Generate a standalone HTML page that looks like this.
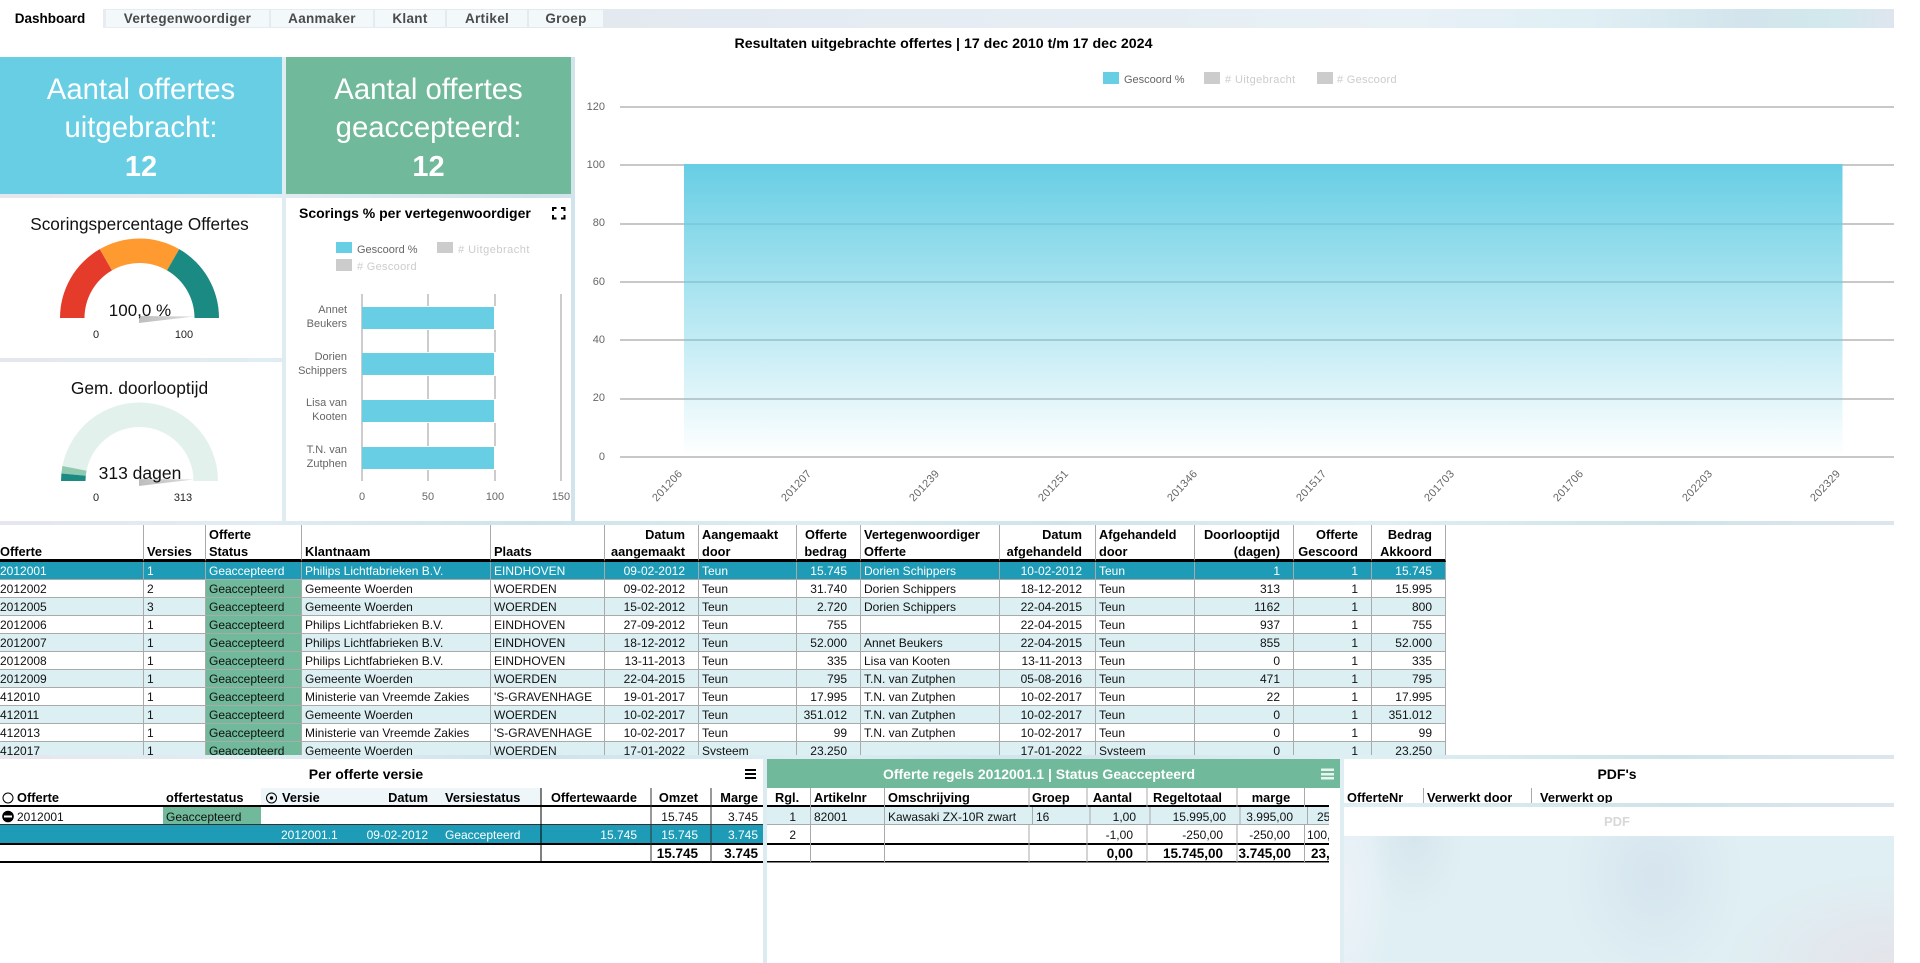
<!DOCTYPE html>
<html lang="nl"><head><meta charset="utf-8"><title>Dashboard</title>
<style>
html,body{margin:0;padding:0;background:#fff}
body{position:relative;width:1920px;height:963px;overflow:hidden;font-family:"Liberation Sans",sans-serif;font-size:12px;color:#111}
.r{position:absolute;background:#fff}
.a{position:absolute;white-space:nowrap;line-height:16px}
.b{font-weight:bold;color:#000;font-size:12.8px}
.w{color:#fff}
.c{transform:translateX(-50%)}
.tab{position:absolute;top:10px;height:17px;background:#f3f8fb;font-weight:bold;font-size:13.5px;letter-spacing:.3px;line-height:17px;text-align:center;color:#4a4a4a}
.card{position:absolute;top:57px;height:137px;color:#fff;text-align:center;font-size:29.3px}
.card div{position:absolute;left:0;right:0;white-space:nowrap;line-height:40px}
svg{position:absolute;left:0;top:0}
svg text{font-family:"Liberation Sans",sans-serif}
#tw{position:absolute;left:0;top:525px;width:1446px;height:230px;overflow:hidden}
#m{border-collapse:separate;border-spacing:0;table-layout:fixed;width:1446px;font-size:12px}
#m td,#m th{box-sizing:border-box;height:18px;padding:0 0 0 3px;border-right:1px solid #aaa;border-bottom:1px solid #aaa;line-height:16px;white-space:nowrap;overflow:hidden;text-align:left;font-weight:normal;color:#111}
#m th{height:36px;font-size:12.8px;font-weight:bold;color:#000;vertical-align:bottom;border-bottom:3px solid #000;line-height:17px;position:relative}
#m th span{position:relative;top:1px}
#m .rr{text-align:right;padding:0 13px 0 0}
#m td:first-child,#m th:first-child{padding-left:0}
#m tr.s td{background:#1e9bb6;color:#fff}
#m tr.z td{background:#dceff3}
#m td.g,#m tr.z td.g{background:#70b99b}
</style></head><body>

<div class="r" style="left:0;top:9px;width:1894px;height:954px;background:linear-gradient(90deg,#e6e6ee 0,#e0edf2 14%,#cfe2ea 28%,#dcedf2 42%,#d0e3eb 56%,#dfeff3 72%,#cfe3ea 88%,#dde6ee 100%)"></div>
<div class="r" style="left:0;top:9px;width:1894px;height:19px;background:linear-gradient(90deg,#e8ecf2 0,#e4e9f0 32%,#e6eef4 60%,#e8f1f6 74%,#dfeff4 84%,#d3e4ec 92%,#d2e9ed 97%,#dfe5ee 100%)"></div>
<div class="r" style="left:0;top:28px;width:1894px;height:29px"></div>

<!-- tabs -->
<div class="r" style="left:0;top:9px;width:103px;height:19px"></div>
<div class="tab" style="left:0;width:103px;background:#fff;color:#000;padding-right:3px;box-sizing:border-box;letter-spacing:0">Dashboard</div>
<div class="tab" style="left:106px;width:163px">Vertegenwoordiger</div>
<div class="tab" style="left:271px;width:102px">Aanmaker</div>
<div class="tab" style="left:375px;width:70px">Klant</div>
<div class="tab" style="left:447px;width:80px">Artikel</div>
<div class="tab" style="left:529px;width:74px">Groep</div>

<!-- cards -->
<div class="card" style="left:0;width:282px;background:#67cee4">
<div style="top:13px">Aantal offertes</div><div style="top:51px">uitgebracht:</div><div style="top:90px;font-weight:bold;font-size:29px">12</div></div>
<div class="card" style="left:286px;width:285px;background:#70b99b">
<div style="top:13px">Aantal offertes</div><div style="top:51px">geaccepteerd:</div><div style="top:90px;font-weight:bold;font-size:29px">12</div></div>

<!-- white panels -->
<div class="r" style="left:0;top:198px;width:282px;height:160px"></div>
<div class="r" style="left:0;top:362px;width:282px;height:159px"></div>
<div class="r" style="left:286px;top:198px;width:285px;height:323px"></div>
<div class="r" style="left:575px;top:57px;width:1319px;height:464px"></div>
<div class="r" style="left:0;top:525px;width:1894px;height:230px"></div>
<div class="r" style="left:0;top:759px;width:763px;height:204px"></div>
<div class="r" style="left:767px;top:759px;width:573px;height:29px;background:#70b99b"></div>
<div class="r" style="left:767px;top:788px;width:573px;height:175px"></div>
<div class="r" style="left:1344px;top:759px;width:550px;height:44px"></div>
<div class="r" style="left:1344px;top:807px;width:550px;height:29px"></div>
<div class="r" style="left:1344px;top:836px;width:550px;height:127px;background:radial-gradient(ellipse 50px 130px at 0 60px,#edf2f8 0,rgba(237,242,248,0) 100%),radial-gradient(ellipse 50px 80px at 70px 0,#d6e6ed 0,rgba(214,230,237,0) 100%),radial-gradient(ellipse 90px 110px at 310px 40px,#d6e5ee 0,rgba(214,229,238,0) 100%),radial-gradient(ellipse 170px 90px at 100% 100%,#e4e3ea 0,rgba(228,227,234,0) 100%),#dfeff3"></div>

<svg width="1920" height="963" viewBox="0 0 1920 963">
<defs>
<linearGradient id="ar" x1="0" y1="0" x2="0" y2="1"><stop offset="0" stop-color="#67cee4" stop-opacity="1"/><stop offset="1" stop-color="#67cee4" stop-opacity="0"/></linearGradient>
<linearGradient id="nd" x1="0" y1="0" x2="1" y2="0"><stop offset="0" stop-color="#bdbdbd"/><stop offset="1" stop-color="#dcdcdc"/></linearGradient>
</defs>

<!-- gauge 1 -->
<path d="M60 318A79.500 79.500 0 0 1 99.750 249.150L112 270.370A55 55 0 0 0 84.500 318Z" fill="#e53b2a"/>
<path d="M99.750 249.150A79.500 79.500 0 0 1 179.250 249.150L167 270.370A55 55 0 0 0 112 270.370Z" fill="#ff9a30"/>
<path d="M179.250 249.150A79.500 79.500 0 0 1 219 318L194.500 318A55 55 0 0 0 167 270.370Z" fill="#1b8a82"/>
<polygon points="139,316 194,316.500 139,323" fill="url(#nd)"/>
<text x="139.500" y="230" font-size="17.200" text-anchor="middle" fill="#111">Scoringspercentage Offertes</text>
<text x="140" y="316" font-size="17" text-anchor="middle" fill="#111">100,0 %</text>
<text x="96" y="338" font-size="11" text-anchor="middle" fill="#222">0</text>
<text x="184" y="338" font-size="11" text-anchor="middle" fill="#222">100</text>

<!-- gauge 2 -->
<path d="M61 481A78.500 78.500 0 0 1 218 481L193.500 481A54 54 0 0 0 85.500 481Z" fill="#e2f1eb"/>
<path d="M61.400 473.500L62.400 466L86.500 470.700L85.750 475.800Z" fill="#8fc9b0"/>
<path d="M61 481L61.400 473.500L85.750 475.800L85.500 481Z" fill="#1b8a82"/>
<polygon points="139,479 194,479.500 139,486" fill="url(#nd)"/>
<text x="139.500" y="394" font-size="17.400" text-anchor="middle" fill="#111">Gem. doorlooptijd</text>
<text x="140" y="479" font-size="17.500" text-anchor="middle" fill="#111">313 dagen</text>
<text x="96" y="501" font-size="11" text-anchor="middle" fill="#222">0</text>
<text x="183" y="501" font-size="11" text-anchor="middle" fill="#222">313</text>

<!-- bar chart -->
<text x="299" y="218" font-size="14" font-weight="bold" fill="#000">Scorings % per vertegenwoordiger</text>
<path d="M553 211V208H556.500M561 208H564.500V211M564.500 215V218.500H561M556.500 218.500H553V215" fill="none" stroke="#000" stroke-width="2"/>
<rect x="336" y="242" width="16" height="11" fill="#67cee4"/>
<text x="357" y="253" font-size="11" fill="#666">Gescoord %</text>
<rect x="437" y="242" width="16" height="11" fill="#ccc"/>
<text x="458" y="253" font-size="11" fill="#ccc" letter-spacing=".5"># Uitgebracht</text>
<rect x="336" y="259" width="16" height="12" fill="#ccc"/>
<text x="357" y="270" font-size="11" fill="#ccc" letter-spacing=".3"># Gescoord</text>
<g fill="#ccc"><rect x="361" y="294" width="2" height="187"/><rect x="427" y="294" width="2" height="187"/><rect x="494" y="294" width="2" height="187"/><rect x="560" y="294" width="2" height="187"/></g>
<g fill="#fff"><rect x="363" y="306" width="133" height="24"/><rect x="363" y="352" width="133" height="24"/><rect x="363" y="399" width="133" height="24"/><rect x="363" y="446" width="133" height="24"/></g>
<g fill="#67cee4"><rect x="362" y="307" width="132" height="22"/><rect x="362" y="353" width="132" height="22"/><rect x="362" y="400" width="132" height="22"/><rect x="362" y="447" width="132" height="22"/></g>
<g font-size="11" fill="#666" text-anchor="end">
<text x="347" y="313">Annet</text><text x="347" y="327">Beukers</text>
<text x="347" y="360">Dorien</text><text x="347" y="374">Schippers</text>
<text x="347" y="406">Lisa van</text><text x="347" y="420">Kooten</text>
<text x="347" y="453">T.N. van</text><text x="347" y="467">Zutphen</text>
</g>
<g font-size="11" fill="#666" text-anchor="middle">
<text x="362" y="500">0</text><text x="428" y="500">50</text><text x="495" y="500">100</text><text x="561" y="500">150</text>
</g>

<!-- area chart -->
<text x="943.500" y="48" font-size="14.200" font-weight="bold" fill="#000" text-anchor="middle">Resultaten uitgebrachte offertes | 17 dec 2010 t/m 17 dec 2024</text>
<rect x="1103" y="72" width="16" height="12" fill="#67cee4"/>
<text x="1124" y="83" font-size="11" fill="#666">Gescoord %</text>
<rect x="1204" y="72" width="16" height="12" fill="#ccc"/>
<text x="1225" y="83" font-size="11" fill="#ccc" letter-spacing=".4"># Uitgebracht</text>
<rect x="1317" y="72" width="16" height="12" fill="#ccc"/>
<text x="1337" y="83" font-size="11" fill="#ccc" letter-spacing=".3"># Gescoord</text>
<g fill="#c8c8c8">
<rect x="620" y="106" width="1274" height="2"/><rect x="620" y="164" width="1274" height="2"/><rect x="620" y="223" width="1274" height="2"/><rect x="620" y="281" width="1274" height="2"/><rect x="620" y="339" width="1274" height="2"/><rect x="620" y="398" width="1274" height="2"/><rect x="620" y="456" width="1274" height="2"/>
</g>
<rect x="684" y="164" width="1158.500" height="292" fill="url(#ar)"/>
<g font-size="11" fill="#666" text-anchor="end">
<text x="605" y="110">120</text><text x="605" y="168">100</text><text x="605" y="226">80</text><text x="605" y="285">60</text><text x="605" y="343">40</text><text x="605" y="401">20</text><text x="605" y="460">0</text>
</g>
<g font-size="11" fill="#666" text-anchor="end" letter-spacing=".3">
<text x="683" y="474" transform="rotate(-47 683 474)">201206</text>
<text x="812" y="474" transform="rotate(-47 812 474)">201207</text>
<text x="940" y="474" transform="rotate(-47 940 474)">201239</text>
<text x="1069" y="474" transform="rotate(-47 1069 474)">201251</text>
<text x="1198" y="474" transform="rotate(-47 1198 474)">201346</text>
<text x="1327" y="474" transform="rotate(-47 1327 474)">201517</text>
<text x="1455" y="474" transform="rotate(-47 1455 474)">201703</text>
<text x="1584" y="474" transform="rotate(-47 1584 474)">201706</text>
<text x="1713" y="474" transform="rotate(-47 1713 474)">202203</text>
<text x="1841" y="474" transform="rotate(-47 1841 474)">202329</text>
</g>

<!-- bottom left fills and lines -->
<rect x="261" y="788" width="280" height="17" fill="#eef6f9"/>
<rect x="163" y="807" width="98" height="17" fill="#70b99b"/>
<rect x="0" y="824" width="763" height="1" fill="#333"/>
<rect x="0" y="825" width="763" height="18" fill="#1e9bb6"/>
<rect x="0" y="805" width="763" height="2" fill="#000"/>
<rect x="0" y="843" width="763" height="2" fill="#000"/>
<rect x="0" y="861" width="763" height="2" fill="#000"/>
<rect x="540.500" y="788" width="1" height="75" fill="#000"/>
<rect x="650.500" y="788" width="1" height="75" fill="#333"/>
<rect x="710.500" y="788" width="1" height="75" fill="#333"/>
<circle cx="8" cy="798" r="5" fill="none" stroke="#000" stroke-width="1"/>
<circle cx="271.500" cy="798" r="5" fill="none" stroke="#000" stroke-width="1"/>
<circle cx="271.500" cy="798" r="1.700" fill="#000"/>
<circle cx="8" cy="816.500" r="5.800" fill="#000"/>
<rect x="4" y="815.500" width="8" height="2" fill="#fff"/>
<rect x="745" y="769" width="11" height="2" fill="#000"/><rect x="745" y="773" width="11" height="2" fill="#000"/><rect x="745" y="777" width="11" height="2" fill="#000"/>

<!-- bottom middle -->
<rect x="767" y="807" width="562" height="17" fill="#dceff3"/>
<rect x="767" y="824" width="562" height="1" fill="#aaa"/>
<rect x="767" y="805" width="562" height="2" fill="#000"/>
<rect x="767" y="843" width="562" height="2" fill="#000"/>
<rect x="767" y="861" width="562" height="1.500" fill="#000"/>
<g fill="#aaa">
<rect x="810" y="788" width="1" height="74"/><rect x="884" y="788" width="1" height="74"/>
<rect x="1028.500" y="788" width="1" height="19"/><rect x="1032" y="807" width="1" height="17"/><rect x="1028.500" y="825" width="1" height="37"/>
<rect x="1086.500" y="788" width="1" height="19"/><rect x="1089.500" y="807" width="1" height="17"/><rect x="1086.500" y="825" width="1" height="37"/>
<rect x="1146.500" y="788" width="1" height="19"/><rect x="1149.500" y="807" width="1" height="17"/><rect x="1146.500" y="825" width="1" height="37"/>
<rect x="1236.500" y="788" width="1" height="19"/><rect x="1239.500" y="807" width="1" height="17"/><rect x="1236.500" y="825" width="1" height="37"/>
<rect x="1304" y="788" width="1" height="19"/><rect x="1307" y="807" width="1" height="17"/><rect x="1304" y="825" width="1" height="37"/>
</g>
<g fill="#e8f5ef"><rect x="1321" y="768.500" width="13" height="2.500"/><rect x="1321" y="773" width="13" height="2.500"/><rect x="1321" y="777" width="13" height="2.500"/></g>

<!-- bottom right lines -->
<rect x="1423" y="788" width="1" height="15" fill="#aaa"/>
<rect x="1531" y="788" width="1" height="15" fill="#aaa"/>
</svg>

<!-- main table -->
<div id="tw">
<table id="m">
<colgroup><col style="width:144px"><col style="width:62px"><col style="width:96px"><col style="width:189px"><col style="width:114px"><col style="width:94px"><col style="width:98px"><col style="width:64px"><col style="width:139px"><col style="width:96px"><col style="width:99px"><col style="width:99px"><col style="width:78px"><col style="width:74px"></colgroup>
<tr><th><span>Offerte</span></th><th><span>Versies</span></th><th><span>Offerte<br>Status</span></th><th><span>Klantnaam</span></th><th><span>Plaats</span></th><th class="rr"><span>Datum<br>aangemaakt</span></th><th><span>Aangemaakt<br>door</span></th><th class="rr"><span>Offerte<br>bedrag</span></th><th><span>Vertegenwoordiger<br>Offerte</span></th><th class="rr"><span>Datum<br>afgehandeld</span></th><th><span>Afgehandeld<br>door</span></th><th class="rr"><span>Doorlooptijd<br>(dagen)</span></th><th class="rr"><span>Offerte<br>Gescoord</span></th><th class="rr"><span>Bedrag<br>Akkoord</span></th></tr>
<tr class="s"><td>2012001</td><td>1</td><td>Geaccepteerd</td><td>Philips Lichtfabrieken B.V.</td><td>EINDHOVEN</td><td class="rr">09-02-2012</td><td>Teun</td><td class="rr">15.745</td><td>Dorien Schippers</td><td class="rr">10-02-2012</td><td>Teun</td><td class="rr">1</td><td class="rr">1</td><td class="rr">15.745</td></tr>
<tr><td>2012002</td><td>2</td><td class="g">Geaccepteerd</td><td>Gemeente Woerden</td><td>WOERDEN</td><td class="rr">09-02-2012</td><td>Teun</td><td class="rr">31.740</td><td>Dorien Schippers</td><td class="rr">18-12-2012</td><td>Teun</td><td class="rr">313</td><td class="rr">1</td><td class="rr">15.995</td></tr>
<tr class="z"><td>2012005</td><td>3</td><td class="g">Geaccepteerd</td><td>Gemeente Woerden</td><td>WOERDEN</td><td class="rr">15-02-2012</td><td>Teun</td><td class="rr">2.720</td><td>Dorien Schippers</td><td class="rr">22-04-2015</td><td>Teun</td><td class="rr">1162</td><td class="rr">1</td><td class="rr">800</td></tr>
<tr><td>2012006</td><td>1</td><td class="g">Geaccepteerd</td><td>Philips Lichtfabrieken B.V.</td><td>EINDHOVEN</td><td class="rr">27-09-2012</td><td>Teun</td><td class="rr">755</td><td></td><td class="rr">22-04-2015</td><td>Teun</td><td class="rr">937</td><td class="rr">1</td><td class="rr">755</td></tr>
<tr class="z"><td>2012007</td><td>1</td><td class="g">Geaccepteerd</td><td>Philips Lichtfabrieken B.V.</td><td>EINDHOVEN</td><td class="rr">18-12-2012</td><td>Teun</td><td class="rr">52.000</td><td>Annet Beukers</td><td class="rr">22-04-2015</td><td>Teun</td><td class="rr">855</td><td class="rr">1</td><td class="rr">52.000</td></tr>
<tr><td>2012008</td><td>1</td><td class="g">Geaccepteerd</td><td>Philips Lichtfabrieken B.V.</td><td>EINDHOVEN</td><td class="rr">13-11-2013</td><td>Teun</td><td class="rr">335</td><td>Lisa van Kooten</td><td class="rr">13-11-2013</td><td>Teun</td><td class="rr">0</td><td class="rr">1</td><td class="rr">335</td></tr>
<tr class="z"><td>2012009</td><td>1</td><td class="g">Geaccepteerd</td><td>Gemeente Woerden</td><td>WOERDEN</td><td class="rr">22-04-2015</td><td>Teun</td><td class="rr">795</td><td>T.N. van Zutphen</td><td class="rr">05-08-2016</td><td>Teun</td><td class="rr">471</td><td class="rr">1</td><td class="rr">795</td></tr>
<tr><td>412010</td><td>1</td><td class="g">Geaccepteerd</td><td>Ministerie van Vreemde Zakies</td><td>'S-GRAVENHAGE</td><td class="rr">19-01-2017</td><td>Teun</td><td class="rr">17.995</td><td>T.N. van Zutphen</td><td class="rr">10-02-2017</td><td>Teun</td><td class="rr">22</td><td class="rr">1</td><td class="rr">17.995</td></tr>
<tr class="z"><td>412011</td><td>1</td><td class="g">Geaccepteerd</td><td>Gemeente Woerden</td><td>WOERDEN</td><td class="rr">10-02-2017</td><td>Teun</td><td class="rr">351.012</td><td>T.N. van Zutphen</td><td class="rr">10-02-2017</td><td>Teun</td><td class="rr">0</td><td class="rr">1</td><td class="rr">351.012</td></tr>
<tr><td>412013</td><td>1</td><td class="g">Geaccepteerd</td><td>Ministerie van Vreemde Zakies</td><td>'S-GRAVENHAGE</td><td class="rr">10-02-2017</td><td>Teun</td><td class="rr">99</td><td>T.N. van Zutphen</td><td class="rr">10-02-2017</td><td>Teun</td><td class="rr">0</td><td class="rr">1</td><td class="rr">99</td></tr>
<tr class="z"><td>412017</td><td>1</td><td class="g">Geaccepteerd</td><td>Gemeente Woerden</td><td>WOERDEN</td><td class="rr">17-01-2022</td><td>Systeem</td><td class="rr">23.250</td><td></td><td class="rr">17-01-2022</td><td>Systeem</td><td class="rr">0</td><td class="rr">1</td><td class="rr">23.250</td></tr>
</table>
</div>

<!-- Per offerte versie -->
<div class="a b c" style="left:366px;top:766px;font-size:14px">Per offerte versie</div>
<div class="a b" style="left:17px;top:789.500px">Offerte</div>
<div class="a b" style="left:166px;top:789.500px">offertestatus</div>
<div class="a b" style="left:282px;top:789.500px">Versie</div>
<div class="a b" style="right:1492px;top:789.500px">Datum</div>
<div class="a b" style="left:445px;top:789.500px">Versiestatus</div>
<div class="a b" style="right:1283px;top:789.500px">Offertewaarde</div>
<div class="a b" style="right:1222px;top:789.500px">Omzet</div>
<div class="a b" style="right:1162px;top:789.500px">Marge</div>
<div class="a" style="left:17px;top:808.500px">2012001</div>
<div class="a" style="left:166px;top:808.500px">Geaccepteerd</div>
<div class="a" style="right:1222px;top:808.500px">15.745</div>
<div class="a" style="right:1162px;top:808.500px">3.745</div>
<div class="a w" style="left:281px;top:827px">2012001.1</div>
<div class="a w" style="right:1492px;top:827px">09-02-2012</div>
<div class="a w" style="left:445px;top:827px">Geaccepteerd</div>
<div class="a w" style="right:1283px;top:827px">15.745</div>
<div class="a w" style="right:1222px;top:827px">15.745</div>
<div class="a w" style="right:1162px;top:827px">3.745</div>
<div class="a b" style="right:1222px;top:845.500px;font-size:13.500px">15.745</div>
<div class="a b" style="right:1162px;top:845.500px;font-size:13.500px">3.745</div>

<!-- Offerte regels -->
<div class="a c w" style="left:1039px;top:766px;font-size:14px;font-weight:bold">Offerte regels 2012001.1 | Status Geaccepteerd</div>
<div class="a b" style="left:775px;top:789.500px">Rgl.</div>
<div class="a b" style="left:814px;top:789.500px">Artikelnr</div>
<div class="a b" style="left:888px;top:789.500px">Omschrijving</div>
<div class="a b" style="left:1032px;top:789.500px">Groep</div>
<div class="a b" style="right:788px;top:789.500px">Aantal</div>
<div class="a b" style="right:698px;top:789.500px">Regeltotaal</div>
<div class="a b c" style="left:1271px;top:789.500px">marge</div>
<div class="a" style="right:1124px;top:808.500px">1</div>
<div class="a" style="left:814px;top:808.500px">82001</div>
<div class="a" style="left:888px;top:808.500px">Kawasaki ZX-10R zwart</div>
<div class="a" style="left:1036px;top:808.500px">16</div>
<div class="a" style="right:784px;top:808.500px">1,00</div>
<div class="a" style="right:694px;top:808.500px">15.995,00</div>
<div class="a" style="right:627px;top:808.500px">3.995,00</div>
<div class="a" style="left:1317px;top:808.500px;width:12px;overflow:hidden">25</div>
<div class="a" style="right:1124px;top:827px">2</div>
<div class="a" style="right:787px;top:827px">-1,00</div>
<div class="a" style="right:697px;top:827px">-250,00</div>
<div class="a" style="right:630px;top:827px">-250,00</div>
<div class="a" style="left:1307px;top:827px;width:22px;overflow:hidden">100,</div>
<div class="a b" style="right:787px;top:845.500px;font-size:13.500px">0,00</div>
<div class="a b" style="right:697px;top:845.500px;font-size:13.500px">15.745,00</div>
<div class="a b" style="right:629px;top:845.500px;font-size:13.500px">3.745,00</div>
<div class="a b" style="left:1311px;top:845.500px;width:18px;overflow:hidden;font-size:13.500px">23,</div>

<!-- PDF -->
<div class="a b c" style="left:1617px;top:766px;font-size:14px">PDF's</div>
<div class="a b" style="left:1347px;top:789.500px;height:13.500px;overflow:hidden">OfferteNr</div>
<div class="a b" style="left:1427px;top:789.500px;height:13.500px;overflow:hidden">Verwerkt door</div>
<div class="a b" style="left:1540px;top:789.500px;height:13.500px;overflow:hidden">Verwerkt op</div>
<div class="a c" style="left:1617px;top:814px;font-weight:bold;color:#d8d8d8;font-size:13px">PDF</div>

</body></html>
